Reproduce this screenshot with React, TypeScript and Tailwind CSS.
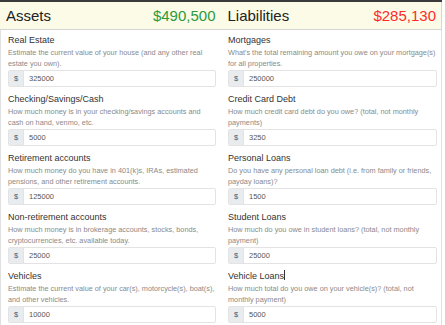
import React from 'react'

type Field = {
  label: string
  help: string
  value: string
  caret?: boolean
}

const assets: Field[] = [
  {
    label: 'Real Estate',
    help: 'Estimate the current value of your house (and any other real estate you own).',
    value: '325000',
  },
  {
    label: 'Checking/Savings/Cash',
    help: 'How much money is in your checking/savings accounts and cash on hand, venmo, etc.',
    value: '5000',
  },
  {
    label: 'Retirement accounts',
    help: 'How much money do you have in 401(k)s, IRAs, estimated pensions, and other retirement accounts.',
    value: '125000',
  },
  {
    label: 'Non-retirement accounts',
    help: 'How much money is in brokerage accounts, stocks, bonds, cryptocurrencies, etc. available today.',
    value: '25000',
  },
  {
    label: 'Vehicles',
    help: 'Estimate the current value of your car(s), motorcycle(s), boat(s), and other vehicles.',
    value: '10000',
  },
]

const liabilities: Field[] = [
  {
    label: 'Mortgages',
    help: "What's the total remaining amount you owe on your mortgage(s) for all properties.",
    value: '250000',
  },
  {
    label: 'Credit Card Debt',
    help: 'How much credit card debt do you owe? (total, not monthly payments)',
    value: '3250',
  },
  {
    label: 'Personal Loans',
    help: 'Do you have any personal loan debt (i.e. from family or friends, payday loans)?',
    value: '1500',
  },
  {
    label: 'Student Loans',
    help: 'How much do you owe in student loans? (total, not monthly payment)',
    value: '25000',
  },
  {
    label: 'Vehicle Loans',
    help: 'How much total do you owe on your vehicle(s)? (total, not monthly payment)',
    value: '5000',
    caret: true,
  },
]

function MoneyField({ field }: { field: Field }) {
  return (
    <div className="mb-[5px]">
      <div className="text-[9px] leading-[14px] text-[#333]">
        {field.label}
        {field.caret && <span className="inline-block w-px h-[10px] bg-[#333] align-[-1px]" />}
      </div>
      <div className="text-[7.3px] leading-[11px] text-[#8a8a8a]">{field.help}</div>
      <div className="mt-px flex h-[17px] border border-[#e3e3e3] rounded-[2px] overflow-hidden">
        <div className="w-[15px] bg-[#e9ecef] border-r border-[#e3e3e3] flex items-center justify-center text-[7.5px] text-[#555]">
          $
        </div>
        <div className="flex-1 flex items-center pl-[5px] text-[7.5px] text-[#555]">
          {field.value}
        </div>
      </div>
    </div>
  )
}

export default function App() {
  return (
    <div
      className="w-[445px] h-[325px] bg-white overflow-hidden"
      style={{ fontFamily: '"Liberation Sans", Arial, sans-serif' }}
    >
      <div className="w-[442px] border-t-2 border-[#3a3a3a]">
        <div className="grid grid-cols-2 h-[28px] pt-[2px] bg-[#fbfbe8] border-b border-[#d6d6d6] border-r border-r-[#d6d6d6]">
          <div className="flex items-center justify-between pl-[6px] pr-[5px]">
            <span className="text-[15px] text-[#222]">Assets</span>
            <span className="text-[15px] text-[#2c9a3c]">$490,500</span>
          </div>
          <div className="flex items-center justify-between pl-[7px] pr-[5px]">
            <span className="text-[15px] text-[#222]">Liabilities</span>
            <span className="text-[15px] text-[#ff2a2a]">$285,130</span>
          </div>
        </div>
        <div className="grid grid-cols-2 border-l border-r border-[#e0e0e0] pt-[3px]">
          <div className="pl-[7px] pr-[5px]">
            {assets.map((f) => (
              <MoneyField key={f.label} field={f} />
            ))}
          </div>
          <div className="pl-[7px] pr-[4px]">
            {liabilities.map((f) => (
              <MoneyField key={f.label} field={f} />
            ))}
          </div>
        </div>
      </div>
    </div>
  )
}
